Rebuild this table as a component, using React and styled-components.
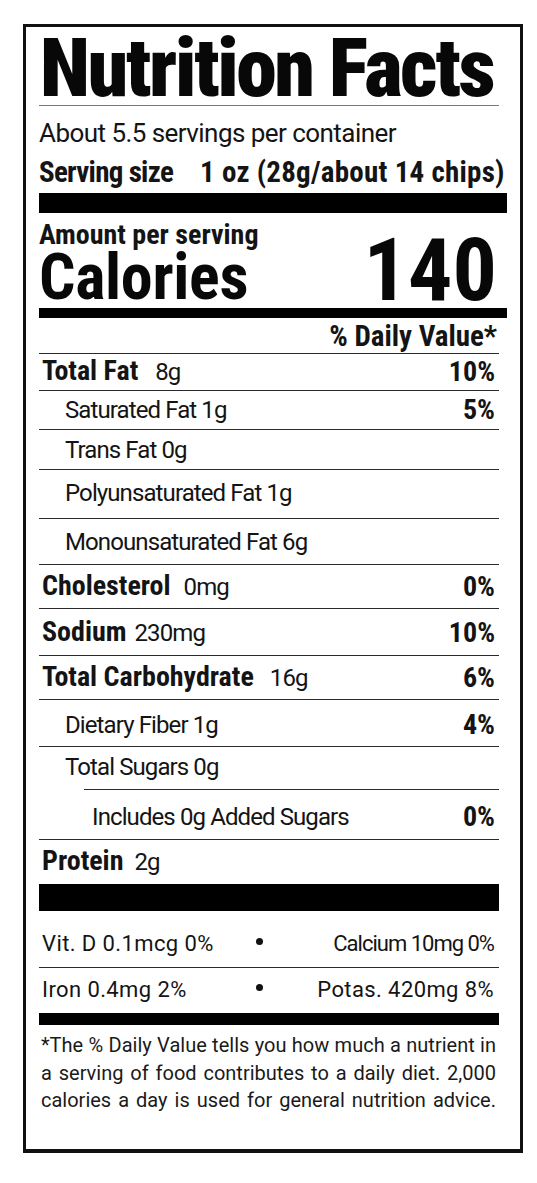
import React from "react"
import styled, { createGlobalStyle, css } from "styled-components"

const INK = "#141414";

const cond = css`
  font-family: Roboto, "Roboto Condensed", "Liberation Sans", sans-serif;
  font-stretch: condensed;
  font-weight: 700;
`;

const plain = css`
  font-family: Roboto, "Liberation Sans", sans-serif;
  font-stretch: normal;
  font-weight: 400;
`;

const Global = createGlobalStyle`
  html, body {
    margin: 0;
    background: #fff;
  }
  body {
    font-family: Roboto, "Liberation Sans", sans-serif;
    color: ${INK};
  }
`;

const Label = styled.section`
  box-sizing: border-box;
  width: 500px;
  margin: 24px 0 0 23px;
  border: 3px solid #111;
  border-bottom-width: 4px;
  padding: 0 21px 34px 13px;
`;

const Title = styled.h1`
  margin: 0;
  padding: 5px 0 0 1px;
  ${cond};
  font-weight: 900;
  font-size: 82px;
  line-height: 73px;
  letter-spacing: -2.4px;
  color: #080808;
  white-space: nowrap;
`;

const Rule = styled.div`
  height: 1px;
  margin-left: ${p => p.$inset || 0}px;
  background: ${p => p.$light ? "#777" : "#2a2a2a"};
`;

const Bar = styled.div`
  height: ${p => p.$h}px;
  margin-top: ${p => p.$top || 0}px;
  margin-right: ${p => p.$wide ? -8 : 0}px;
  background: #000;
`;

const Servings = styled.div`
  ${plain};
  margin-top: 12px;
  font-size: 26px;
  line-height: 30px;
  letter-spacing: -0.55px;
  white-space: nowrap;
`;

const ServingSize = styled.div`
  display: flex;
  gap: 27px;
  margin-top: 8px;
  ${cond};
  font-size: 29px;
  line-height: 32px;
  white-space: nowrap;
`;

const ServLabel = styled.span`
  letter-spacing: -0.7px;
`;

const ServValue = styled.span`
  letter-spacing: 0.25px;
`;

const CalorieBlock = styled.div`
  display: flex;
  justify-content: space-between;
  align-items: flex-end;
  ${cond};
`;

const Amount = styled.div`
  margin-top: 8px;
  font-size: 28px;
  line-height: 28px;
`;

const Calories = styled.div`
  font-size: 64px;
  line-height: 58px;
  letter-spacing: -0.3px;
  color: #080808;
`;

const CalValue = styled.div`
  font-size: 88px;
  line-height: 75px;
  padding-right: 2px;
  color: #080808;
`;

const DvHead = styled.div`
  padding: 2px 2px 0 0;
  text-align: right;
  ${cond};
  font-size: 29px;
  line-height: 33px;
`;

const Row = styled.div`
  box-sizing: border-box;
  display: flex;
  justify-content: space-between;
  align-items: flex-end;
  height: ${p => p.$h}px;
  padding-bottom: ${p => p.$pad}px;
  ${cond};
  font-size: 28px;
  line-height: 30px;
  white-space: nowrap;
`;

const Name = styled.span`
  padding-left: ${p => [3, 26, 53][p.$indent]}px;
`;

const Plain = styled.span`
  ${plain};
  margin-left: ${p => p.$gap || 0}px;
  font-size: 24px;
  letter-spacing: -0.9px;
`;

const Dv = styled.span`
  padding-right: 4px;
`;

const MineralRow = styled.div`
  box-sizing: border-box;
  display: grid;
  grid-template-columns: 213px 8px 1fr;
  align-items: end;
  height: ${p => p.$h}px;
  padding: 0 5px ${p => p.$pad}px 3px;
  font-size: 22px;
  line-height: 30px;
  white-space: nowrap;
`;

const Mineral = styled.span`
  ${plain};
  text-align: ${p => p.$right ? "right" : "left"};
  letter-spacing: ${p => p.$ls ?? 0.4}px;
`;

const Dot = styled.span`
  justify-self: center;
  display: inline-block;
  width: 7px;
  height: 7px;
  margin-bottom: 14px;
  border-radius: 50%;
  background: #111;
`;

const Footnote = styled.div`
  ${plain};
  margin-top: 7px;
  padding: 0 3px 0 2px;
  font-size: 20px;
  line-height: 27.5px;
  color: #1a1a1a;
`;

const FootLine = styled.span`
  display: block;
  text-align: justify;
  text-align-last: justify;
  white-space: nowrap;
`;

const nutrients = [
  { name: "Total Fat", amt: "8g", dv: "10%", bold: true, h: 37, pad: 3, gap: 17 },
  { name: "Saturated Fat 1g", dv: "5%", indent: 1, h: 39, pad: 4 },
  { name: "Trans Fat 0g", indent: 1, h: 40, pad: 4 },
  { name: "Polyunsaturated Fat 1g", indent: 1, h: 49, pad: 10 },
  { name: "Monounsaturated Fat 6g", indent: 1, h: 46, pad: 7 },
  { name: "Cholesterol", amt: "0mg", dv: "0%", bold: true, h: 44, pad: 6, gap: 13 },
  { name: "Sodium", amt: "230mg", dv: "10%", bold: true, h: 47, pad: 7, gap: 8 },
  { name: "Total Carbohydrate", amt: "16g", dv: "6%", bold: true, h: 44, pad: 6, gap: 16 },
  { name: "Dietary Fiber 1g", dv: "4%", indent: 1, h: 47, pad: 6 },
  { name: "Total Sugars 0g", indent: 1, h: 43, pad: 7, inset: 45 },
  { name: "Includes 0g Added Sugars", dv: "0%", indent: 2, h: 50, pad: 7 },
  { name: "Protein", amt: "2g", bold: true, h: 45, pad: 7, gap: 11 },
];

const minerals = [
  { left: "Vit. D 0.1mcg 0%", right: "Calcium 10mg 0%", ls: -1, h: 56, pad: 8 },
  { left: "Iron 0.4mg 2%", right: "Potas. 420mg 8%", h: 45, pad: 8 },
];

const footnote = [
  "*The % Daily Value tells you how much a nutrient in",
  "a serving of food contributes to a daily diet. 2,000",
  "calories a day is used for general nutrition advice.",
];

function NutrientRow({ n }) {
  return (
    <Row $h={n.h - 1} $pad={n.pad}>
      <Name $indent={n.indent || 0}>
        {n.bold ? n.name : <Plain>{n.name}</Plain>}
        {n.amt && <Plain $gap={n.gap}>{n.amt}</Plain>}
      </Name>
      {n.dv && <Dv>{n.dv}</Dv>}
    </Row>
  );
}

export default function App() {
  return (
    <>
      <Global />
      <Label>
        <Title>Nutrition Facts</Title>
        <Rule $light />
        <Servings>About 5.5 servings per container</Servings>
        <ServingSize>
          <ServLabel>Serving size</ServLabel>
          <ServValue>1 oz (28g/about 14 chips)</ServValue>
        </ServingSize>
        <Bar $h={20} $top={5} $wide />

        <CalorieBlock>
          <div>
            <Amount>Amount per serving</Amount>
            <Calories>Calories</Calories>
          </div>
          <CalValue>140</CalValue>
        </CalorieBlock>
        <Bar $h={10} $top={1} $wide />

        <DvHead>% Daily Value*</DvHead>
        <Rule />
        {nutrients.map((n, i) => (
          <React.Fragment key={n.name}>
            <NutrientRow n={n} />
            {i < nutrients.length - 1 && <Rule $inset={n.inset} />}
          </React.Fragment>
        ))}
        <Bar $h={27} />

        {minerals.map((m, i) => (
          <React.Fragment key={m.left}>
            <MineralRow $h={m.h} $pad={m.pad}>
              <Mineral>{m.left}</Mineral>
              <Dot />
              <Mineral $right $ls={m.ls}>{m.right}</Mineral>
            </MineralRow>
            {i === 0 && <Rule />}
          </React.Fragment>
        ))}
        <Bar $h={12} />

        <Footnote>
          {footnote.map(line => <FootLine key={line}>{line}</FootLine>)}
        </Footnote>
      </Label>
    </>
  );
}
